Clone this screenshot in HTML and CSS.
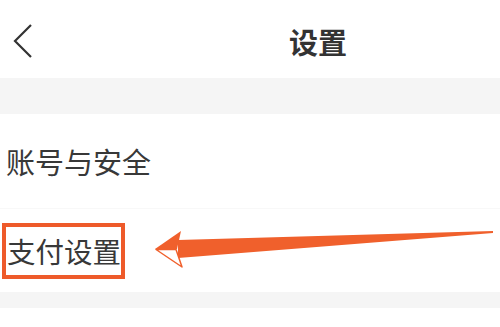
FILE: index.html
```html
<!DOCTYPE html>
<html lang="zh">
<head>
<meta charset="utf-8">
<title>设置</title>
<link rel="stylesheet" href="styles.css">
</head>
<body>
<div class="page">
  <header class="topbar">
    <span class="back">
      <svg width="22" height="36" viewBox="0 0 22 36"><polyline points="18,2 2,18 18,34" fill="none" stroke="#333" stroke-width="2.2" stroke-linejoin="miter"/></svg>
    </span>
    <h1 class="title">设置</h1>
  </header>
  <div class="band"></div>
  <div class="row row-first">账号与安全</div>
  <div class="row row-second"><span class="highlight">支付设置</span></div>
  <div class="band band-small"></div>
  <svg class="annot" viewBox="0 0 500 327" width="500" height="327">
    <polygon points="178,240 493,231 493,233 178,258" fill="#f0602c"/>
    <polygon points="155,249 181,231 177,249" fill="#f0602c"/>
    <polygon points="156,249.5 176,249.5 182,267" fill="#fff" stroke="#f0602c" stroke-width="1.5" stroke-linejoin="round"/>
  </svg>
</div>
</body>
</html>
```
FILE: styles.css
```css
html, body {
  margin: 0;
  padding: 0;
  background: #fff;
}
.page {
  position: relative;
  width: 500px;
  height: 327px;
  overflow: hidden;
  font-family: "Noto Sans CJK SC", "Noto Sans", sans-serif;
  color: #333;
}
.topbar {
  height: 78px;
  display: flex;
  align-items: center;
  position: relative;
}
.back {
  display: flex;
  margin-left: 13px;
  margin-top: 4px;
}
.title {
  margin: 0;
  position: absolute;
  left: 289px;
  top: 20px;
  font-size: 29px;
  font-weight: 700;
  line-height: 42px;
}
.band {
  height: 36px;
  background: #f5f5f5;
}
.band-small {
  height: 16px;
}
.row {
  display: flex;
  align-items: center;
  font-size: 29px;
  line-height: 40px;
  color: #383838;
}
.row-first {
  height: 94px;
  padding-left: 6px;
  border-bottom: 1px solid #f8f8f8;
}
.row-second {
  height: 83px;
  padding-left: 2px;
}
.highlight {
  border: 4px solid #ee5a2a;
  padding: 0 0 0 1px;
  font-size: 28.5px;
  line-height: 48px;
  margin-top: 1px;
}
.annot {
  position: absolute;
  left: 0;
  top: 0;
  pointer-events: none;
}
```
